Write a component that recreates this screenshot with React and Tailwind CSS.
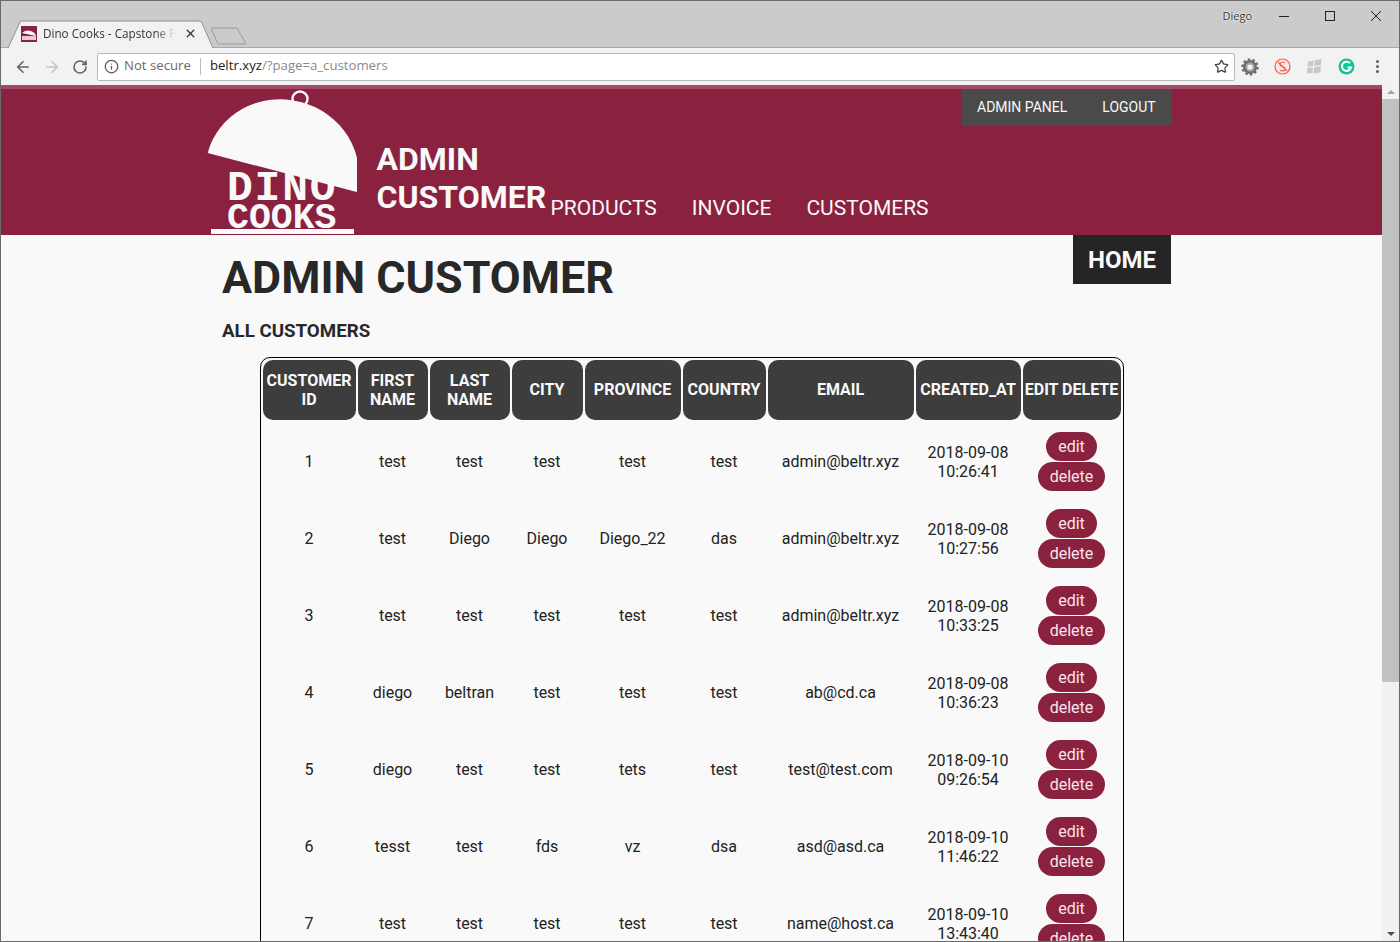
import { ArrowLeft, ArrowRight, RotateCw, Star, Info, X, MoreVertical } from 'lucide-react';

const headers = ['CUSTOMER ID', 'FIRST NAME', 'LAST NAME', 'CITY', 'PROVINCE', 'COUNTRY', 'EMAIL', 'CREATED_AT', 'EDIT DELETE'];

const customers = [
  [1, 'test', 'test', 'test', 'test', 'test', 'admin@beltr.xyz', '2018-09-08', '10:26:41'],
  [2, 'test', 'Diego', 'Diego', 'Diego_22', 'das', 'admin@beltr.xyz', '2018-09-08', '10:27:56'],
  [3, 'test', 'test', 'test', 'test', 'test', 'admin@beltr.xyz', '2018-09-08', '10:33:25'],
  [4, 'diego', 'beltran', 'test', 'test', 'test', 'ab@cd.ca', '2018-09-08', '10:36:23'],
  [5, 'diego', 'test', 'test', 'tets', 'test', 'test@test.com', '2018-09-10', '09:26:54'],
  [6, 'tesst', 'test', 'fds', 'vz', 'dsa', 'asd@asd.ca', '2018-09-10', '11:46:22'],
  [7, 'test', 'test', 'test', 'test', 'test', 'name@host.ca', '2018-09-10', '13:43:40'],
];

function Logo() {
  return (
    <div className="relative w-[150px] h-[146px] shrink-0">
      <span className="absolute left-[20px] top-[78px] text-[43px] leading-none font-bold tracking-[1.8px] text-[#f9f9f9] font-['Liberation_Mono',monospace]">DINO</span>
      <span className="absolute left-[20px] top-[112px] text-[36.5px] leading-none font-bold text-[#f9f9f9] font-['Liberation_Mono',monospace]">COOKS</span>
      <svg className="absolute left-0 top-0" width="150" height="146" viewBox="0 0 150 146">
        <circle cx="93" cy="10" r="7.5" fill="none" stroke="#f9f9f9" strokeWidth="2.5" />
        <path d="M0.7 64 A 77 73 14.7 0 1 149.7 103 Z" fill="#f9f9f9" />
        <rect x="4" y="140" width="143" height="5" fill="#f9f9f9" />
      </svg>
    </div>
  );
}

function Tabs() {
  return (
    <div className="relative h-[46px] shrink-0 bg-[#cbcbcb]">
      <svg className="absolute left-0 top-0" width="260" height="47" viewBox="0 0 260 47">
        <path d="M7 47 L19 21 Q20 20 22 20 L198 20 Q200 20 201 22 L212 47" fill="#f2f2f2" stroke="#8f8f8f" />
        <path d="M210 27 L236 27 L245 43 L219 43 Q217 43 216 41 Z" fill="#cbcbcb" stroke="#9a9a9a" />
        <rect x="20" y="25" width="16" height="16" fill="#8a213f" />
        <path d="M21 32 A 8 7 10 0 1 35 35 Z" fill="#f9f9f9" />
        <rect x="21" y="35" width="14" height="4" fill="#e8c9d2" />
      </svg>
      <span className="absolute left-[42px] top-[24px] w-[132px] overflow-hidden whitespace-nowrap text-[11.7px] leading-[17px] text-[#333] font-['Open_Sans',sans-serif] [mask-image:linear-gradient(to_right,black_85%,transparent)]">Dino Cooks - Capstone P</span>
      <X className="absolute left-[183px] top-[26px] text-[#333]" size={13} strokeWidth={2.4} />
      <div className="absolute right-0 top-0 flex items-center h-[30px]">
        <span className="mr-[9px] text-[11px] text-[#333] font-['Open_Sans',sans-serif] [text-shadow:0_0_2px_#fff,0_0_2px_#fff]">Diego</span>
        <div className="w-[46px] flex justify-center">
          <svg width="10" height="10" viewBox="0 0 10 10"><path d="M0 5.5 H10" stroke="#222" /></svg>
        </div>
        <div className="w-[46px] flex justify-center">
          <svg width="10" height="10" viewBox="0 0 10 10"><rect x="0.5" y="0.5" width="9" height="9" fill="none" stroke="#222" /></svg>
        </div>
        <div className="w-[46px] flex justify-center">
          <svg width="10" height="10" viewBox="0 0 10 10"><path d="M0 0 L10 10 M10 0 L0 10" stroke="#222" /></svg>
        </div>
      </div>
    </div>
  );
}

function Toolbar() {
  return (
    <div className="h-[38px] shrink-0 flex items-center bg-[#f2f2f2] border-t border-[#a8a8a8]">
      <div className="w-[96px] shrink-0 flex items-center pl-[13px] gap-[11px]">
        <ArrowLeft size={18} strokeWidth={2.2} className="text-[#5f6368]" />
        <ArrowRight size={18} strokeWidth={2.2} className="text-[#c4c4c4]" />
        <RotateCw size={16} strokeWidth={2.4} className="text-[#5f6368]" />
      </div>
      <div className="w-[1138px] h-[28px] shrink-0 flex items-center bg-white border border-[#b9b9b9] rounded-[2px] pl-[6px] pr-[5px] text-[13.2px] font-['Open_Sans',sans-serif]">
        <Info size={15} strokeWidth={2} className="text-[#555]" />
        <span className="ml-[5px] -mt-[1px] text-[#6a6a6a]">Not secure</span>
        <span className="w-px h-[17px] mx-[9px] bg-[#bdbdbd]" />
        <span className="-mt-[1px] text-[#222]">beltr.xyz</span>
        <span className="-mt-[1px] text-[#8a8a8a]">/?page=a_customers</span>
        <Star size={15} strokeWidth={2} className="ml-auto text-[#444]" />
      </div>
      <div className="flex items-center -ml-px">
        <div className="w-[32px] flex justify-center">
          <svg width="18" height="18" viewBox="0 0 18 18">
            <circle cx="9" cy="9" r="7" fill="#6e6e6e" />
            <circle cx="9" cy="9" r="7.5" fill="none" stroke="#6e6e6e" strokeWidth="2.4" strokeDasharray="2.4 2.3" />
            <circle cx="9" cy="9" r="4.5" fill="#a8a8a8" />
            <circle cx="9" cy="9" r="2.6" fill="#f2f2f2" />
          </svg>
        </div>
        <div className="w-[32px] flex justify-center">
          <svg width="17" height="17" viewBox="0 0 17 17">
            <circle cx="8.5" cy="8.5" r="7.5" fill="#fbe6e3" stroke="#e8604f" strokeWidth="1.2" />
            <path d="M11 4.5 Q6 3.5 6 6.5 Q6 8 8.5 8.5 Q11 9 11 11 Q11 13.5 6 12.5 M4 4 L13 13" fill="none" stroke="#e8604f" strokeWidth="1.2" />
          </svg>
        </div>
        <div className="w-[32px] flex justify-center">
          <svg width="17" height="17" viewBox="0 0 17 17">
            <path d="M2 4 L7.5 2.5 L7 8 L1.5 9 Z M8.7 2.5 L15.5 1 L15 7 L8.2 8 Z M1.3 10 L7 9.2 L6.5 15 L1 15.5 Z M8 9.2 L15 8.2 L14.3 14.5 L7.7 15.5 Z" fill="#c8c8c8" />
          </svg>
        </div>
        <div className="w-[32px] flex justify-center">
          <svg width="17" height="17" viewBox="0 0 17 17">
            <circle cx="8.5" cy="8.5" r="8" fill="#15c39a" />
            <path d="M12 5.2 A 4.6 4.6 0 1 0 13 9.5 L9.5 9.5" fill="none" stroke="#fff" strokeWidth="2" />
          </svg>
        </div>
        <div className="w-[31px] flex justify-center">
          <MoreVertical size={17} strokeWidth={2.4} className="text-[#5f6368]" />
        </div>
      </div>
    </div>
  );
}

function SiteHeader() {
  return (
    <header className="h-[150px] shrink-0 bg-[#8a213f] border-t-4 border-[#a34a68] text-[#f9f9f9]">
      <div className="w-[965px] ml-[206px] flex">
        <Logo />
        <div className="flex-1 flex flex-col">
          <div className="flex justify-end">
            <div className="h-[37px] w-[210px] flex items-center gap-[35px] pl-[15px] bg-[#4a4a4a] text-[14px]">
              <span>ADMIN PANEL</span>
              <span>LOGOUT</span>
            </div>
          </div>
          <div className="flex items-end mt-[14px] ml-[19.5px]">
            <h1 className="w-[174px] shrink-0 text-[32px] leading-[38px] font-bold">ADMIN CUSTOMER</h1>
            <nav className="flex gap-[35px] text-[21px] leading-[26px] -mb-[5px]">
              <span>PRODUCTS</span>
              <span>INVOICE</span>
              <span>CUSTOMERS</span>
            </nav>
          </div>
        </div>
      </div>
    </header>
  );
}

function CustomerTable() {
  return (
    <div className="w-[864px] ml-[54px] mt-[14px] border border-black rounded-[10px] rounded-b-none">
      <table className="w-full table-fixed border-separate border-spacing-[2px] text-[16px] text-[#222]">
        <colgroup>
          {[93, 70, 80, 71, 96, 83, 146, 105, 98].map((w, i) => (
            <col key={i} style={{ width: w }} />
          ))}
        </colgroup>
        <thead>
          <tr>
            {headers.map(h => (
              <th key={h} className="h-[60px] px-0 pb-px pr-px bg-[#3d3d3d] rounded-[10px] text-[#f9f9f9] text-[16px] leading-[19px] font-bold">
                {h}
              </th>
            ))}
          </tr>
        </thead>
        <tbody>
          {customers.map(row => (
            <tr key={row[0]}>
              {row.slice(0, 7).map((val, i) => (
                <td key={i} className="h-[75px] pt-[5px] pr-px text-center">{val}</td>
              ))}
              <td className="pt-[5px] pr-px text-center leading-[19px]">{row[7]}<br />{row[8]}</td>
              <td className="pr-px text-center">
                <div className="flex flex-col items-center gap-px pt-[3px]">
                  <span className="h-[29px] px-[12px] pt-px flex items-center rounded-full bg-[#8a213f] text-[#f9e4ea]">edit</span>
                  <span className="h-[29px] px-[12px] pt-px flex items-center rounded-full bg-[#8a213f] text-[#f9e4ea]">delete</span>
                </div>
              </td>
            </tr>
          ))}
        </tbody>
      </table>
    </div>
  );
}

function Scrollbar() {
  return (
    <div className="w-[17px] shrink-0 flex flex-col items-center bg-[#f1f1f1]">
      <div className="h-[14px] w-full flex items-center justify-center">
        <span className="border-x-[4px] border-x-transparent border-b-[4px] border-b-[#a3a3a3]" />
      </div>
      <div className="w-full h-[583px] bg-[#c1c1c1]" />
      <div className="mt-auto h-[14px] w-full flex items-center justify-center">
        <span className="border-x-[4px] border-x-transparent border-t-[4px] border-t-[#505050]" />
      </div>
    </div>
  );
}

export default function App() {
  return (
    <div className="w-[1400px] h-[942px] flex flex-col overflow-hidden border border-[#6a6a6a] font-['Roboto',sans-serif]">
      <Tabs />
      <Toolbar />
      <div className="flex-1 min-h-0 flex">
        <div className="flex-1 min-w-0 flex flex-col overflow-hidden bg-[#f9f9f9]">
          <SiteHeader />
          <main className="w-[965px] ml-[205px] text-[#282828]">
            <div className="flex justify-between">
              <div className="pl-[16px]">
                <h2 className="mt-[17px] text-[44.8px] leading-[52px] font-bold">ADMIN CUSTOMER</h2>
                <h3 className="mt-[16px] text-[18.72px] leading-[23px] font-bold">ALL CUSTOMERS</h3>
              </div>
              <div className="h-[49px] w-[98px] pt-px flex items-center justify-center bg-[#252525] text-[#f9f9f9] text-[24px] font-bold">HOME</div>
            </div>
            <CustomerTable />
          </main>
        </div>
        <Scrollbar />
      </div>
    </div>
  );
}
